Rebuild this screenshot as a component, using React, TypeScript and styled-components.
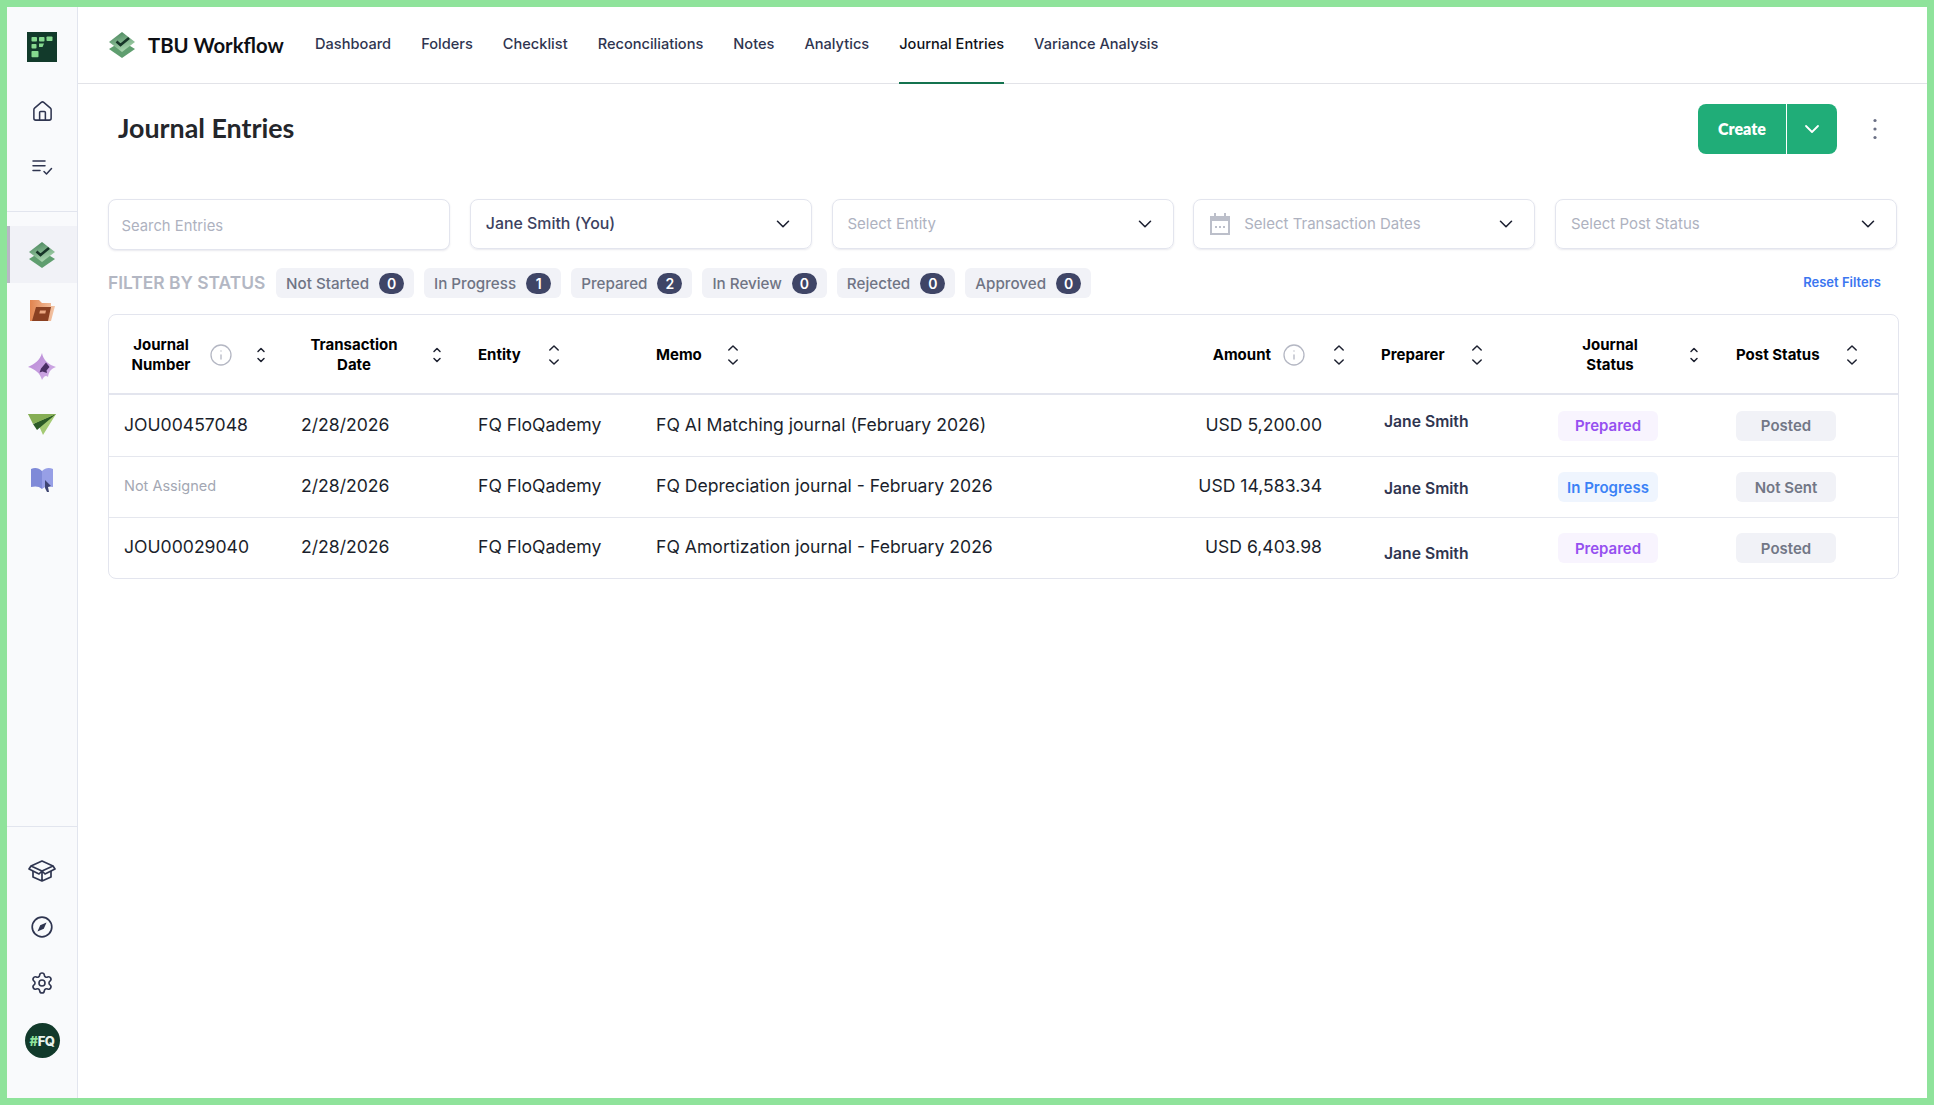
import React from 'react';
import styled, { createGlobalStyle } from 'styled-components';
import { ChevronDown, House, Info, Settings } from 'lucide-react';

const GlobalStyle = createGlobalStyle`
  html, body {
    margin: 0;
    padding: 0;
    height: 100%;
    background: #8fe39b;
  }
  * { box-sizing: border-box; }
  body { font-family: 'Inter', 'Liberation Sans', sans-serif; }
`;

const Frame = styled.div`
  width: 1934px;
  height: 1105px;
  padding: 7px;
  overflow: hidden;
`;

const Shell = styled.div`
  display: flex;
  height: 100%;
  background: #ffffff;
`;

const Sidebar = styled.aside`
  width: 71px;
  flex-shrink: 0;
  display: flex;
  flex-direction: column;
  background: #f9fafc;
  border-right: 1px solid #e2e5ee;
`;

const SideTop = styled.div`
  height: 205px;
  display: flex;
  flex-direction: column;
  align-items: center;
  gap: 28px;
  padding-top: 25px;
  border-bottom: 1px solid #e2e5ee;
`;

const LogoSlot = styled.div`
  display: flex;
  margin-bottom: 7px;
`;

const SideApps = styled.div`
  flex: 1;
  padding-top: 14px;
`;

const SideBottom = styled.div`
  height: 272px;
  display: flex;
  flex-direction: column;
  align-items: center;
  gap: 28px;
  padding-top: 30px;
  border-top: 1px solid #e2e5ee;
  color: #2f3550;
`;

const SideItem = styled.div<{ $active?: boolean }>`
  height: ${props => (props.$active ? '57px' : '56px')};
  display: flex;
  align-items: center;
  justify-content: center;
  background: ${props => (props.$active ? '#f1f2f7' : 'transparent')};
  border-left: 3px solid ${props => (props.$active ? '#b9b7c6' : 'transparent')};
  padding-right: 3px;
`;

const SideIcon = styled.div`
  width: 30px;
  height: 28px;
  display: flex;
  align-items: center;
  justify-content: center;
  color: #2f3550;
`;

const Avatar = styled.div`
  width: 35px;
  height: 35px;
  margin-top: -2px;
  border-radius: 50%;
  background: #123a2b;
  color: #e9f3ec;
  display: flex;
  align-items: center;
  justify-content: center;
  font-size: 13px;
  font-weight: 800;
  letter-spacing: -0.5px;
  span { color: #8fe39b; }
`;

const Main = styled.main`
  flex: 1;
  min-width: 0;
  display: flex;
  flex-direction: column;
`;

const TopNav = styled.nav`
  height: 77px;
  display: flex;
  align-items: stretch;
  padding-left: 30px;
  border-bottom: 1px solid #e2e3e8;
`;

const Brand = styled.div`
  display: flex;
  align-items: center;
  gap: 12px;
  width: 207px;
`;

const BrandName = styled.span`
  font-family: 'Lato', 'Liberation Sans', sans-serif;
  font-size: 20.3px;
  font-weight: 700;
  color: #0d0f14;
`;

const NavLinks = styled.div`
  display: flex;
  gap: 30px;
`;

const NavLink = styled.a<{ $active?: boolean }>`
  display: flex;
  align-items: center;
  padding-bottom: 2px;
  font-family: 'Inter', 'Liberation Sans', sans-serif;
  font-size: 14.6px;
  font-weight: 500;
  color: ${props => (props.$active ? '#10131a' : '#2f3550')};
  border-bottom: 2px solid ${props => (props.$active ? '#14734f' : 'transparent')};
  margin-bottom: -1px;
`;

const Content = styled.div`
  padding: 20px 29px 0 30px;
`;

const PageHeader = styled.div`
  height: 50px;
  display: flex;
  align-items: center;
  justify-content: space-between;
  padding-left: 10px;
`;

const PageTitle = styled.h1`
  margin: 0 0 2px;
  font-family: 'Lato', 'Liberation Sans', sans-serif;
  font-size: 26.8px;
  font-weight: 700;
  color: #24262b;
`;

const HeaderActions = styled.div`
  display: flex;
  align-items: center;
  color: #6b7085;
`;

const CreateButton = styled.div`
  display: flex;
  width: 139px;
  height: 50px;
  margin-right: 27px;
  border-radius: 8px;
  overflow: hidden;
  background: #20ad78;
  color: #ffffff;
`;

const CreateLabel = styled.span`
  width: 89px;
  display: flex;
  align-items: center;
  justify-content: center;
  padding-bottom: 1px;
  font-family: 'Lato', 'Liberation Sans', sans-serif;
  font-size: 16px;
  font-weight: 800;
  border-right: 1px solid #ffffff;
`;

const CreateCaret = styled.span`
  flex: 1;
  display: flex;
  align-items: center;
  justify-content: center;
`;

const MoreSlot = styled.span`
  width: 22px;
  margin-right: 12px;
  display: flex;
  justify-content: center;
`;

const Filters = styled.div`
  display: grid;
  grid-template-columns: repeat(5, 342px);
  gap: 19.75px;
  margin-top: 45px;
`;

const SearchBox = styled.input`
  height: 51px;
  border: 1px solid #e3e5ee;
  border-radius: 8px;
  box-shadow: 0 1px 2px rgba(40, 44, 90, 0.1);
  padding: 2px 12.5px 0;
  font: 400 14.8px 'Inter', 'Liberation Sans', sans-serif;
  outline: none;
  &::placeholder { color: #aeb2bf; opacity: 1; }
`;

const Select = styled.div`
  height: 50px;
  display: flex;
  align-items: center;
  gap: 14px;
  padding: 0 17px 0 15px;
  border: 1px solid #e3e5ee;
  border-radius: 8px;
  box-shadow: 0 1px 2px rgba(40, 44, 90, 0.1);
  color: #1b1f30;
`;

const CalendarSlot = styled.span`
  display: flex;
  margin-left: 1px;
`;

const SelectText = styled.span<{ $filled?: boolean }>`
  flex: 1;
  padding-bottom: 2px;
  font-size: ${props => (props.$filled ? '15.9px' : '15px')};
  font-weight: ${props => (props.$filled ? 500 : 400)};
  color: ${props => (props.$filled ? '#3c4160' : '#aeb2bf')};
`;

const StatusRow = styled.div`
  height: 30px;
  margin-top: 18px;
  display: flex;
  align-items: center;
  gap: 10px;
`;

const StatusTitle = styled.span`
  width: 158px;
  padding-bottom: 2px;
  font-size: 17.4px;
  font-weight: 600;
  white-space: nowrap;
  color: #b3b7c3;
`;

const Chip = styled.div`
  height: 30px;
  display: flex;
  align-items: center;
  gap: 10px;
  padding: 0 10px;
  border-radius: 6px;
  background: #f1f2f7;
  color: #6f7484;
  font-size: 15.2px;
  font-weight: 500;
`;

const ChipCount = styled.span`
  min-width: 25px;
  height: 21px;
  display: flex;
  align-items: center;
  justify-content: center;
  border-radius: 11px;
  background: #3f4566;
  color: #ffffff;
  font-size: 14px;
  font-weight: 600;
`;

const ResetLink = styled.a`
  margin-left: auto;
  padding: 0 17px 2px 0;
  font-size: 13px;
  font-weight: 600;
  color: #3b76f0;
`;

const Table = styled.div`
  margin-top: 16px;
  width: 1791px;
  border: 1px solid #e3e5ee;
  border-radius: 8px;
`;

const columns = '177px 177px 178px 460px 265px 177px 178px 1fr';

const HeadRow = styled.div`
  display: grid;
  grid-template-columns: ${columns};
  height: 80px;
  border-bottom: 2px solid #e3e5ee;
`;

const BodyRow = styled.div`
  display: grid;
  grid-template-columns: ${columns};
  height: 61px;
  & + & { border-top: 1px solid #e5e7ee; }
`;

const HeadCell = styled.div<{ $right?: boolean }>`
  display: flex;
  align-items: center;
  justify-content: ${props => (props.$right ? 'flex-end' : 'flex-start')};
  padding: 2px ${props => (props.$right ? '21px' : '0')} 0 15px;
  color: #000000;
`;

const HeadLabel = styled.span<{ $width?: number }>`
  width: ${props => (props.$width ? `${props.$width}px` : 'auto')};
  font-size: 15px;
  line-height: 20px;
  font-weight: 700;
  text-align: center;
  flex-shrink: 0;
`;

const InfoSlot = styled.span`
  display: flex;
  margin-left: 11px;
  color: #b4b7c3;
`;

const SortSlot = styled.span<{ $gap: number }>`
  display: flex;
  margin-left: ${props => props.$gap}px;
  color: #1d2130;
`;

const Cell = styled.div<{ $right?: boolean }>`
  display: flex;
  align-items: center;
  justify-content: ${props => (props.$right ? 'flex-end' : 'flex-start')};
  padding: 0 ${props => (props.$right ? '44px' : '0')} 3px 15px;
  font-size: 17.6px;
  color: #1b1f2c;
`;

const Unassigned = styled.span`
  font-size: 14.5px;
  color: #a3a7b3;
`;

const PreparerName = styled.span<{ $nudge: number }>`
  margin-top: ${props => props.$nudge}px;
  margin-left: 3px;
  font-size: 15.7px;
  font-weight: 600;
  color: #2f3550;
`;

const tones = {
  purple: { bg: '#f8f4fe', fg: '#9550f0' },
  blue: { bg: '#eff5fe', fg: '#3b82f6' },
  gray: { bg: '#f1f2f7', fg: '#727786' },
};

const Badge = styled.span<{ $tone: keyof typeof tones }>`
  width: 100px;
  height: 30px;
  margin-top: 3px;
  display: flex;
  align-items: center;
  justify-content: center;
  border-radius: 6px;
  font-size: 15px;
  font-weight: 600;
  background: ${props => tones[props.$tone].bg};
  color: ${props => tones[props.$tone].fg};
`;

const SortIcon = ({ small }: { small?: boolean }) => (
  <svg width="12" height="24" viewBox="0 0 12 24" fill="none" stroke="currentColor" strokeWidth="1.5" strokeLinecap="round" strokeLinejoin="round">
    {small ? (
      <>
        <path d="M3 8.5 6 5.5 9 8.5" />
        <path d="M3 15.5 6 18.5 9 15.5" />
      </>
    ) : (
      <>
        <path d="M1.8 7 6 3 10.2 7" />
        <path d="M1.8 17 6 21 10.2 17" />
      </>
    )}
  </svg>
);

const LogoMark = () => (
  <svg width="30" height="30" viewBox="0 0 30 30">
    <rect width="30" height="30" fill="#123a2b" />
    <g fill="#86d98f">
      <rect x="4.5" y="5" width="5.5" height="4.5" rx="0.8" />
      <rect x="12" y="5" width="5.5" height="4.5" rx="0.8" />
      <rect x="19.5" y="4.5" width="6" height="4.5" rx="0.8" />
      <rect x="4.5" y="12" width="5" height="4.5" rx="0.8" />
      <path d="M12 11.5h5l-1.5 3.5h-3.5Z" />
      <rect x="4.5" y="19" width="7" height="6.2" rx="0.8" />
    </g>
  </svg>
);

const StackIcon = ({ id }: { id: string }) => (
  <svg width="28" height="28" viewBox="0 0 28 28">
    <defs>
      <linearGradient id={id} x1="0" y1="0" x2="0.4" y2="1">
        <stop offset="0" stopColor="#3f7d54" />
        <stop offset="1" stopColor="#a8d5ae" />
      </linearGradient>
    </defs>
    <path d="M14 10 27 18 14 27 1 18Z" fill="#5f9e6f" />
    <path d="M14 1 27 11 14 21 1 11Z" fill={`url(#${id})`} />
    <path d="M8.5 10.5 12.5 14 21 7" fill="none" stroke="#173528" strokeWidth="2.6" />
  </svg>
);

const FolderIcon = () => (
  <svg width="28" height="24" viewBox="0 0 28 24">
    <defs>
      <linearGradient id="folder-back" x1="0" y1="0" x2="1" y2="0">
        <stop offset="0" stopColor="#e2844f" />
        <stop offset="1" stopColor="#f3c6a8" />
      </linearGradient>
    </defs>
    <path d="M2 1h9l3 3h9v3h4l-4 15H2Z" fill="url(#folder-back)" />
    <path d="M8 8h15l-3 14H4Z" fill="#8a4022" />
    <path d="M12 11.5h6l-.7 3h-6Z" fill="#eba882" />
  </svg>
);

const SparkIcon = () => (
  <svg width="28" height="28" viewBox="0 0 28 28">
    <defs>
      <linearGradient id="spark-fill" x1="0" y1="0" x2="1" y2="1">
        <stop offset="0" stopColor="#b886d6" />
        <stop offset="1" stopColor="#d2b0e6" />
      </linearGradient>
    </defs>
    <path d="M14 0 C15 7 21 12 28 14 C23 16 21 18 20 24 C18 22 16 23 14 27 C12 20 7 16 0 14 C7 11 12 7 14 0Z" fill="url(#spark-fill)" />
    <path d="M18 9.5 21.5 14 18.5 17.5 19 20 14.5 18.5 11.5 19.5 13 15.5Z" fill="#4a2f63" />
  </svg>
);

const PlaneIcon = () => (
  <svg width="28" height="24" viewBox="0 0 28 24">
    <path d="M0 3 28 3 15 24 11 15Z" fill="#a4ca74" />
    <path d="M5 13 28 3 9 19Z" fill="#2c5a27" />
    <path d="M0 3 28 3 5 13Z" fill="#86ae55" />
  </svg>
);

const BookIcon = () => (
  <svg width="24" height="27" viewBox="0 0 24 27">
    <path d="M1 3 C5 1 9 2 12 5 V23 C9 20 5 20 1 21Z" fill="#7f8ad8" />
    <path d="M23 3 C19 1 15 2 12 5 V23 C15 20 19 20 23 21Z" fill="#979fe6" />
    <path d="M15 14 21 20 18 21 19 26 17 26 15 22Z" fill="#3f4572" />
  </svg>
);

const ChecklistIcon = () => (
  <svg width="22" height="18" viewBox="0 0 22 18" fill="none" stroke="currentColor" strokeWidth="1.5" strokeLinecap="round" strokeLinejoin="round">
    <path d="M2 3h12M2 7.7h12M2 12.4h7" />
    <path d="M13 13.5l2.5 2.5 5-5.5" />
  </svg>
);

const BoxIcon = () => (
  <svg width="28" height="22" viewBox="0 0 28 22" fill="none" stroke="currentColor" strokeWidth="1.7" strokeLinejoin="round">
    <path d="M14 1 25 6 14 11 3 6Z" />
    <path d="M3 6 1 9 11 14 14 11 17 14 27 9 25 6" />
    <path d="M5 11V17L14 21 23 17V11M14 11V21" />
  </svg>
);

const CompassIcon = () => (
  <svg width="22" height="22" viewBox="0 0 22 22" fill="none" stroke="currentColor" strokeWidth="1.7">
    <circle cx="11" cy="11" r="9.8" />
    <path d="M15.5 6.5 12.8 12.8 6.5 15.5 9.2 9.2Z" fill="currentColor" stroke="none" />
  </svg>
);

const CalendarIcon = () => (
  <svg width="20" height="22" viewBox="0 0 20 22">
    <path d="M0 3h4V0h2v3h8V0h2v3h4v19H0Z" fill="#bcbfca" />
    <rect x="2" y="8" width="16" height="12" fill="#ffffff" />
    <path d="M5 13h2v2H5ZM9 13h2v2H9ZM13 13h2v2h-2Z" fill="#bcbfca" />
  </svg>
);

const KebabIcon = () => (
  <svg width="6" height="24" viewBox="0 0 6 24" fill="currentColor">
    <circle cx="3" cy="3.5" r="1.6" />
    <circle cx="3" cy="12" r="1.6" />
    <circle cx="3" cy="20.5" r="1.6" />
  </svg>
);

const navItems = ['Dashboard', 'Folders', 'Checklist', 'Reconciliations', 'Notes', 'Analytics', 'Journal Entries', 'Variance Analysis'];

const statuses = [
  ['Not Started', 0],
  ['In Progress', 1],
  ['Prepared', 2],
  ['In Review', 0],
  ['Rejected', 0],
  ['Approved', 0],
] as const;

const rows = [
  { number: 'JOU00457048', memo: 'FQ AI Matching journal (February 2026)', amount: 'USD 5,200.00', nudge: -5, status: 'Prepared', tone: 'purple', post: 'Posted' },
  { number: null, memo: 'FQ Depreciation journal - February 2026', amount: 'USD 14,583.34', nudge: 6, status: 'In Progress', tone: 'blue', post: 'Not Sent' },
  { number: 'JOU00029040', memo: 'FQ Amortization journal - February 2026', amount: 'USD 6,403.98', nudge: 13, status: 'Prepared', tone: 'purple', post: 'Posted' },
] as const;

const Caret = () => <ChevronDown size={22} strokeWidth={1.7} />;

const App: React.FC = () => (
  <>
    <GlobalStyle />
    <Frame>
      <Shell>
        <Sidebar>
          <SideTop>
            <LogoSlot><LogoMark /></LogoSlot>
            <SideIcon><House size={23} strokeWidth={1.6} /></SideIcon>
            <SideIcon><ChecklistIcon /></SideIcon>
          </SideTop>
          <SideApps>
            <SideItem $active><SideIcon><StackIcon id="stack-side" /></SideIcon></SideItem>
            <SideItem><SideIcon><FolderIcon /></SideIcon></SideItem>
            <SideItem><SideIcon><SparkIcon /></SideIcon></SideItem>
            <SideItem><SideIcon><PlaneIcon /></SideIcon></SideItem>
            <SideItem><SideIcon><BookIcon /></SideIcon></SideItem>
          </SideApps>
          <SideBottom>
            <SideIcon><BoxIcon /></SideIcon>
            <SideIcon><CompassIcon /></SideIcon>
            <SideIcon><Settings size={24} strokeWidth={1.6} /></SideIcon>
            <Avatar><span>#</span>FQ</Avatar>
          </SideBottom>
        </Sidebar>
        <Main>
          <TopNav>
            <Brand>
              <StackIcon id="stack-brand" />
              <BrandName>TBU Workflow</BrandName>
            </Brand>
            <NavLinks>
              {navItems.map(item => (
                <NavLink key={item} $active={item === 'Journal Entries'}>{item}</NavLink>
              ))}
            </NavLinks>
          </TopNav>
          <Content>
            <PageHeader>
              <PageTitle>Journal Entries</PageTitle>
              <HeaderActions>
                <CreateButton>
                  <CreateLabel>Create</CreateLabel>
                  <CreateCaret><ChevronDown size={24} strokeWidth={1.8} /></CreateCaret>
                </CreateButton>
                <MoreSlot><KebabIcon /></MoreSlot>
              </HeaderActions>
            </PageHeader>
            <Filters>
              <SearchBox placeholder="Search Entries" />
              <Select><SelectText $filled>Jane Smith (You)</SelectText><Caret /></Select>
              <Select><SelectText>Select Entity</SelectText><Caret /></Select>
              <Select><CalendarSlot><CalendarIcon /></CalendarSlot><SelectText>Select Transaction Dates</SelectText><Caret /></Select>
              <Select><SelectText>Select Post Status</SelectText><Caret /></Select>
            </Filters>
            <StatusRow>
              <StatusTitle>FILTER BY STATUS</StatusTitle>
              {statuses.map(([label, count]) => (
                <Chip key={label}>{label}<ChipCount>{count}</ChipCount></Chip>
              ))}
              <ResetLink>Reset Filters</ResetLink>
            </StatusRow>
            <Table>
              <HeadRow>
                <HeadCell>
                  <HeadLabel $width={74}>Journal Number</HeadLabel>
                  <InfoSlot><Info size={24} strokeWidth={1.3} /></InfoSlot>
                  <SortSlot $gap={22}><SortIcon small /></SortSlot>
                </HeadCell>
                <HeadCell>
                  <HeadLabel $width={106}>Transaction Date</HeadLabel>
                  <SortSlot $gap={24}><SortIcon small /></SortSlot>
                </HeadCell>
                <HeadCell>
                  <HeadLabel>Entity</HeadLabel>
                  <SortSlot $gap={27}><SortIcon /></SortSlot>
                </HeadCell>
                <HeadCell>
                  <HeadLabel>Memo</HeadLabel>
                  <SortSlot $gap={25}><SortIcon /></SortSlot>
                </HeadCell>
                <HeadCell $right>
                  <HeadLabel>Amount</HeadLabel>
                  <InfoSlot><Info size={24} strokeWidth={1.3} /></InfoSlot>
                  <SortSlot $gap={27}><SortIcon /></SortSlot>
                </HeadCell>
                <HeadCell>
                  <HeadLabel>Preparer</HeadLabel>
                  <SortSlot $gap={26}><SortIcon /></SortSlot>
                </HeadCell>
                <HeadCell>
                  <HeadLabel $width={104}>Journal<br />Status</HeadLabel>
                  <SortSlot $gap={26}><SortIcon small /></SortSlot>
                </HeadCell>
                <HeadCell>
                  <HeadLabel>Post Status</HeadLabel>
                  <SortSlot $gap={26}><SortIcon /></SortSlot>
                </HeadCell>
              </HeadRow>
              {rows.map(row => (
                <BodyRow key={row.memo}>
                  <Cell>{row.number ?? <Unassigned>Not Assigned</Unassigned>}</Cell>
                  <Cell>2/28/2026</Cell>
                  <Cell>FQ FloQademy</Cell>
                  <Cell>{row.memo}</Cell>
                  <Cell $right>{row.amount}</Cell>
                  <Cell><PreparerName $nudge={row.nudge}>Jane Smith</PreparerName></Cell>
                  <Cell><Badge $tone={row.tone}>{row.status}</Badge></Cell>
                  <Cell><Badge $tone="gray">{row.post}</Badge></Cell>
                </BodyRow>
              ))}
            </Table>
          </Content>
        </Main>
      </Shell>
    </Frame>
  </>
);

export default App;
